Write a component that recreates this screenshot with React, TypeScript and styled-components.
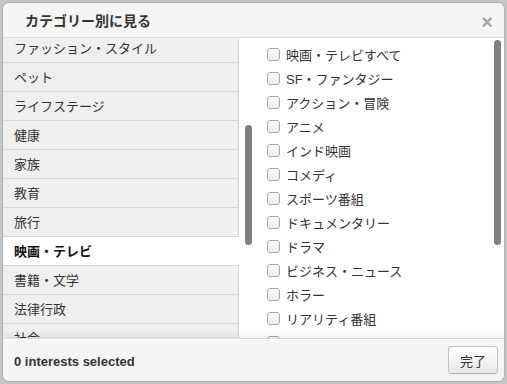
import React, { useEffect, useRef } from "react";
import styled, { createGlobalStyle } from "styled-components";

const categories = [
  "ファッション・スタイル",
  "ペット",
  "ライフステージ",
  "健康",
  "家族",
  "教育",
  "旅行",
  "映画・テレビ",
  "書籍・文学",
  "法律行政",
  "社会",
  "科学",
];

const interests = [
  "映画・テレビすべて",
  "SF・ファンタジー",
  "アクション・冒険",
  "アニメ",
  "インド映画",
  "コメディ",
  "スポーツ番組",
  "ドキュメンタリー",
  "ドラマ",
  "ビジネス・ニュース",
  "ホラー",
  "リアリティ番組",
  "ロマンス",
  "音楽",
];

const GlobalStyle = createGlobalStyle`
  html, body {
    margin: 0;
    padding: 0;
    background: #c6c6c6;
  }
  body {
    font-family: "Liberation Sans", "Noto Sans CJK JP", sans-serif;
    color: #333;
  }
`;

const Page = styled.div`
  padding: 3px;
  width: 507px;
  height: 384px;
  box-sizing: border-box;
`;

const Modal = styled.div`
  width: 501px;
  height: 378px;
  background: #fff;
  border-radius: 6px;
  overflow: hidden;
  display: flex;
  flex-direction: column;
  box-shadow: 0 0 0 1px rgba(0, 0, 0, 0.12);
`;

const Header = styled.div`
  height: 34px;
  flex: none;
  display: flex;
  align-items: center;
  justify-content: space-between;
  padding: 0 11px 0 22px;
  background: #f5f5f5;
  border-bottom: 1px solid #dcdcdc;
`;

const Title = styled.h3`
  margin: 0;
  font-size: 14px;
  font-weight: bold;
  color: #333;
  font-family: "Liberation Sans", "Noto Sans CJK JP", sans-serif;
`;

const Close = styled.span`
  font-size: 20px;
  font-weight: bold;
  color: #a6a6a6;
  line-height: 20px;
  margin-top: 3px;
`;

const Body = styled.div`
  flex: 1;
  display: flex;
  min-height: 0;
`;

const Column = styled.div<{ $width?: number }>`
  position: relative;
  ${(p) => (p.$width ? `width: ${p.$width}px; flex: none;` : "flex: 1;")}
  min-height: 0;
`;

const Scroller = styled.div`
  height: 100%;
  overflow: hidden;
`;

const Thumb = styled.div<{ $left: number; $top: number; $height: number }>`
  position: absolute;
  left: ${(p) => p.$left}px;
  top: ${(p) => p.$top}px;
  width: 7px;
  height: ${(p) => p.$height}px;
  border-radius: 4px;
  background: #808080;
`;

const CategoryList = styled.ul`
  list-style: none;
  margin: 0;
  padding: 0;
  width: 236px;
`;

const CategoryItem = styled.li<{ $active?: boolean }>`
  height: 28px;
  line-height: 29px;
  padding-left: 11px;
  font-size: 13px;
  background: ${(p) => (p.$active ? "#fff" : "#efefef")};
  color: ${(p) => (p.$active ? "#111" : "#333")};
  font-weight: ${(p) => (p.$active ? "bold" : "normal")};
  border-bottom: 1px solid #d6d6d6;
  border-right: 1px solid ${(p) => (p.$active ? "#fff" : "#d6d6d6")};
`;

const InterestList = styled.ul`
  list-style: none;
  margin: 0;
  padding: 4px 0 0 14px;
`;

const InterestItem = styled.li`
  height: 24px;
  display: flex;
  align-items: center;
  font-size: 13px;
  color: #333;
`;

const Box = styled.span`
  width: 11px;
  height: 11px;
  border: 1px solid #a9a9a9;
  border-radius: 3px;
  background: linear-gradient(#fff, #ececec);
  margin-right: 6px;
  flex: none;
`;

const Footer = styled.div`
  height: 42px;
  flex: none;
  display: flex;
  align-items: center;
  justify-content: space-between;
  padding: 0 6px 0 11px;
  background: #f5f5f5;
  border-top: 1px solid #dcdcdc;
  box-shadow: inset 0 1px 0 #fff, 0 -3px 6px rgba(0, 0, 0, 0.08);
  position: relative;
`;

const Count = styled.span`
  font-size: 13px;
  font-weight: bold;
  color: #333;
  margin-top: 2px;
`;

const Button = styled.button`
  height: 28px;
  padding: 0 11px;
  font-size: 13px;
  color: #333;
  font-family: "Liberation Sans", "Noto Sans CJK JP", sans-serif;
  background: linear-gradient(#ffffff, #e8e8e8);
  border: 1px solid #c4c4c4;
  border-bottom-color: #b0b0b0;
  border-radius: 4px;
  box-shadow: inset 0 1px 0 rgba(255, 255, 255, 0.3), 0 1px 2px rgba(0, 0, 0, 0.05);
`;

export default function App() {
  const leftRef = useRef<HTMLDivElement>(null);

  useEffect(() => {
    if (leftRef.current) leftRef.current.scrollTop = 4;
  }, []);

  return (
    <Page>
      <GlobalStyle />
      <Modal>
        <Header>
          <Title>カテゴリー別に見る</Title>
          <Close>×</Close>
        </Header>
        <Body>
          <Column $width={250}>
            <Scroller ref={leftRef}>
              <CategoryList>
                {categories.map((c) => (
                  <CategoryItem key={c} $active={c === "映画・テレビ"}>
                    {c}
                  </CategoryItem>
                ))}
              </CategoryList>
            </Scroller>
            <Thumb $left={242} $top={87} $height={120} />
          </Column>
          <Column>
            <Scroller>
              <InterestList>
                {interests.map((i) => (
                  <InterestItem key={i}>
                    <Box />
                    {i}
                  </InterestItem>
                ))}
              </InterestList>
            </Scroller>
            <Thumb $left={241} $top={2} $height={205} />
          </Column>
        </Body>
        <Footer>
          <Count>0 interests selected</Count>
          <Button>完了</Button>
        </Footer>
      </Modal>
    </Page>
  );
}
